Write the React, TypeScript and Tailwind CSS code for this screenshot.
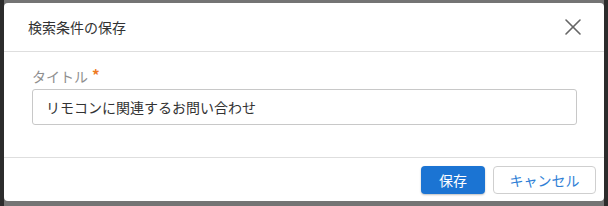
import { X } from 'lucide-react'

const FONT = '"Noto Sans CJK JP", "Noto Sans", sans-serif'

export default function App() {
  return (
    <div className="w-[608px] h-[206px] bg-[#2c2c2c] px-[4px] flex" style={{ fontFamily: FONT }}>
      <div className="w-[600px] bg-[#747474] pt-[3px] pb-[5px] flex">
        <div className="flex-1 bg-white rounded-[4px] flex flex-col overflow-hidden">
          {/* Header */}
          <div className="h-[49px] border-b border-[#dedede] flex items-center justify-between pl-[24px] pr-[17px]">
            <span className="text-[14px] text-[#333]">検索条件の保存</span>
            <X className="w-[28px] h-[28px] text-[#666]" strokeWidth={1.4} />
          </div>

          {/* Body */}
          <div className="pt-[14px] pl-[28px] pr-[27px] h-[106px] border-b border-[#dedede]">
            <div className="h-[20px] leading-[20px] text-[14px] text-[#8f8f8f] flex items-start">
              タイトル
              <span className="text-[#ee7a22] text-[15px] leading-[18px] ml-[4px] font-bold">*</span>
            </div>
            <div className="mt-[3px] h-[36px] border border-[#c8c8c8] rounded-[3px] flex items-center px-[13px] text-[14px] text-[#333]">
              リモコンに関連するお問い合わせ
            </div>
          </div>

          {/* Footer */}
          <div className="flex-1 flex items-start justify-end gap-[8px] pt-[8px] pr-[8px]">
            <button className="w-[64px] h-[28px] rounded-[4px] bg-[#1b74d3] text-white text-[14px] shadow-[0_1px_2px_rgba(0,0,0,0.25)]">
              保存
            </button>
            <button className="w-[103px] h-[28px] rounded-[4px] border border-[#cfcfcf] bg-white text-[#2f7fd6] text-[14px]">
              キャンセル
            </button>
          </div>
        </div>
      </div>
    </div>
  )
}
